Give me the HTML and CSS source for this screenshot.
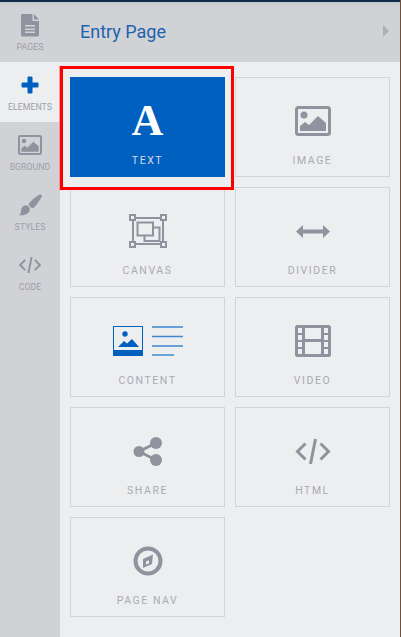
FILE: index.html
```html
<!DOCTYPE html>
<html lang="en">
<head>
<meta charset="utf-8">
<title>Entry Page</title>
<link rel="stylesheet" href="styles.css">
</head>
<body>
<div class="app">
  <div class="topbar"></div>
  <div class="workspace">
    <nav class="sidebar">
      <a class="nav-item">
        <svg class="nav-icon" width="20" height="24" viewBox="0 0 20 24"><path class="fill" fill-rule="evenodd" d="M2 1h10.500v7h6.500v14a1.500 1.500 0 0 1-1.500 1.500h-15A1.500 1.500 0 0 1 1 22V2.500A1.500 1.500 0 0 1 2 1zM14 1l5 5.500h-5zM5 12v1.500h10V12zM5 15.500V17h10v-1.500zM5 18.500V20h10v-1.500z"/></svg>
        <span class="nav-label">PAGES</span>
      </a>
      <a class="nav-item active">
        <svg class="nav-icon" width="18" height="18" viewBox="0 0 18 18"><path class="blue" d="M6.500 1.500A1 1 0 0 1 7.500 .5h3a1 1 0 0 1 1 1v5h5a1 1 0 0 1 1 1v3a1 1 0 0 1-1 1h-5v5a1 1 0 0 1-1 1h-3a1 1 0 0 1-1-1v-5h-5a1 1 0 0 1-1-1v-3a1 1 0 0 1 1-1h5z"/></svg>
        <span class="nav-label">ELEMENTS</span>
      </a>
      <a class="nav-item">
        <svg class="nav-icon" width="24" height="20" viewBox="0 0 36 30"><rect class="outline" x="1.500" y="1.500" width="33" height="27" rx="2"/><circle class="fill" cx="9" cy="9" r="3.500"/><path class="fill" d="M5 25v-5l5-4 4 3 9-9 8 7v8z"/></svg>
        <span class="nav-label">BGROUND</span>
      </a>
      <a class="nav-item">
        <svg class="nav-icon" width="24" height="22" viewBox="0 0 24 22"><path class="fill" d="M22.500 .5c1.200 0 1.800 1.200 1.200 2.200-1.800 3.300-4.800 8-7.700 10.800-1 .9-2 1-2.700.3l-2.300-2.300c-.6-.7-.5-1.600.3-2.500C14 6 19 1.800 22 .6zM4 13.500c1.800-2.500 5.500-2.600 7 -.5 1.400 2 .8 4.600-1 6-2 1.600-5.600 2.800-9.500 2.200 2-1 2.300-2 2.500-3.700.1-1.500 0-2.800 1-4z"/></svg>
        <span class="nav-label">STYLES</span>
      </a>
      <a class="nav-item">
        <svg class="nav-icon" width="23" height="19" viewBox="0 0 36 27"><path class="line" d="M10.500 5.500 2.500 13.500l8 8M25.500 5.500l8 8-8 8M20.500 1 15.500 26"/></svg>
        <span class="nav-label">CODE</span>
      </a>
    </nav>
    <main class="panel">
      <header class="panel-head">
        <h1 class="panel-title">Entry Page</h1>
        <span class="panel-arrow"></span>
      </header>
      <section class="grid">
        <div class="card selected">
          <div class="card-icon"><span class="glyph-a">A</span></div>
          <div class="card-label">TEXT</div>
        </div>
        <div class="card">
          <div class="card-icon"><svg width="36" height="30" viewBox="0 0 36 30"><rect class="outline" x="1.500" y="1.500" width="33" height="27" rx="2"/><circle class="fill" cx="9" cy="9" r="3.500"/><path class="fill" d="M5 25v-5l5-4 4 3 9-9 8 7v8z"/></svg></div>
          <div class="card-label">IMAGE</div>
        </div>
        <div class="card">
          <div class="card-icon"><svg width="38" height="34" viewBox="0 0 38 34"><path class="line-thin" d="M4 4h30v26H4zM8.500 8.500h15.500v13H8.500zM24 13.500h6.500v13.500H15.500v-5.500"/><rect class="handle" x="1" y="1" width="5" height="5"/><rect class="handle" x="32" y="1" width="5" height="5"/><rect class="handle" x="1" y="28" width="5" height="5"/><rect class="handle" x="32" y="28" width="5" height="5"/></svg></div>
          <div class="card-label">CANVAS</div>
        </div>
        <div class="card">
          <div class="card-icon"><svg width="34" height="13" viewBox="0 0 34 13"><path class="fill" d="M0 6.500 7 0v4.500h20V0l7 6.500-7 6.500V8.500H7V13z"/></svg></div>
          <div class="card-label">DIVIDER</div>
        </div>
        <div class="card">
          <div class="card-icon"><svg width="71" height="30" viewBox="0 0 71 30"><rect class="blue-frame" x="1.500" y=".5" width="29" height="29"/><rect class="blue" x="1" y="24" width="30" height="6"/><circle class="blue" cx="13" cy="8" r="2.700"/><path class="blue" d="M6 21l6-6 3 2.500 5-4.500 7 8z"/><path class="blue-line" d="M40 1h31M40 10.500h31M40 20h31"/><path class="blue-line soft" d="M40 29h22"/></svg></div>
          <div class="card-label">CONTENT</div>
        </div>
        <div class="card">
          <div class="card-icon"><svg width="36" height="32" viewBox="0 0 36 32"><path class="fill" fill-rule="evenodd" d="M2.500 0h31A2.500 2.500 0 0 1 36 2.500v27a2.500 2.500 0 0 1-2.500 2.500h-31A2.500 2.500 0 0 1 0 29.500v-27A2.500 2.500 0 0 1 2.500 0zM3 3v5h4V3zM3 10v5h4v-5zM3 17v5h4v-5zM3 24v5h4v-5zM29 3v5h4V3zM29 10v5h4v-5zM29 17v5h4v-5zM29 24v5h4v-5zM10 3v11h16V3zM10 17v12h16V17z"/></svg></div>
          <div class="card-label">VIDEO</div>
        </div>
        <div class="card">
          <div class="card-icon"><svg width="30" height="29" viewBox="0 0 30 29"><path class="share-line" d="M6 14.500 23 6M6 14.500 23 23"/><circle class="fill" cx="6" cy="14.500" r="5.500"/><circle class="fill" cx="23" cy="6" r="6"/><circle class="fill" cx="23" cy="23" r="6"/></svg></div>
          <div class="card-label">SHARE</div>
        </div>
        <div class="card">
          <div class="card-icon"><svg width="36" height="27" viewBox="0 0 36 27"><path class="line" d="M10.500 5.500 2.500 13.500l8 8M25.500 5.500l8 8-8 8M20.500 1 15.500 26"/></svg></div>
          <div class="card-label">HTML</div>
        </div>
        <div class="card">
          <div class="card-icon"><svg width="30" height="30" viewBox="0 0 30 30"><circle class="ring" cx="15" cy="15" r="12.500"/><path class="fill" d="M20 8.500 19 18 10 22 10 13z"/><path class="cut" d="M13 15.500v3.300l3-1.500v-3z"/></svg></div>
          <div class="card-label">PAGE NAV</div>
        </div>
      </section>
      <div class="highlight"></div>
    </main>
  </div>
</div>
</body>
</html>
```
FILE: styles.css
```css
* { box-sizing: border-box; }
html, body { margin: 0; height: 100%; }
body { font-family: Roboto, "Liberation Sans", sans-serif; background: #edeef0; }
.app { width: 401px; height: 637px; display: flex; flex-direction: column; border-right: 1px solid #6f4f3a; overflow: hidden; }
.topbar { height: 2px; background: #10294a; flex: none; }
.workspace { flex: 1; display: flex; min-height: 0; }
.sidebar { width: 60px; flex: none; background: linear-gradient(#c8c9cd, #d1d2d6 6px); display: flex; flex-direction: column; }
.nav-item { height: 60px; display: flex; flex-direction: column; align-items: center; position: relative; }
.nav-item.active { background: #edeef0; }
.nav-icon { position: absolute; top: 23px; left: 30px; transform: translate(-50%, -50%); }
.nav-label { margin-top: 39px; font-size: 8.800px; line-height: 12px; color: #9d9fa8; white-space: nowrap; }
.fill { fill: #90939d; }
.blue { fill: #0060bf; }
.outline { fill: none; stroke: #90939d; stroke-width: 3; }
.line { fill: none; stroke: #90939d; stroke-width: 3; }
.line-thin { fill: none; stroke: #90939d; stroke-width: 2; }
.handle { fill: #edeef0; stroke: #90939d; stroke-width: 2; }
.share-line { fill: none; stroke: #90939d; stroke-width: 3; }
.ring { fill: none; stroke: #90939d; stroke-width: 4; }
.cut { fill: #edeef0; }
.blue-frame { fill: none; stroke: #0060bf; stroke-width: 1; }
.blue-line { fill: none; stroke: #3f86cf; stroke-width: 1.500; }
.blue-line.soft { stroke: #6ba3db; stroke-width: 2; }
.panel { flex: 1; position: relative; min-width: 0; }
.panel-head { height: 60px; background: linear-gradient(#c8c9cd, #d1d2d6 6px); display: flex; align-items: center; justify-content: space-between; padding: 0 11px 2px 20px; }
.panel-title { margin: 0; font-size: 18px; font-weight: 400; color: #1c63b0; }
.panel-arrow { width: 0; height: 0; border-left: 6px solid #aeb0b8; border-top: 6px solid transparent; border-bottom: 6px solid transparent; }
.grid { display: grid; grid-template-columns: 155px 155px; grid-auto-rows: 100px; gap: 10px; padding: 15px 10px; }
.card { border: 1px solid #d2d3d7; padding-top: 18px; display: flex; flex-direction: column; align-items: center; }
.card.selected { background: #0060bf; border-color: #0060bf; }
.card-icon { height: 50px; display: flex; align-items: center; justify-content: center; }
.card-icon svg { display: block; }
.card-label { margin-top: 8px; font-size: 10.500px; line-height: 14px; letter-spacing: 1.550px; color: #a9abb3; white-space: nowrap; }
.selected .card-label { color: #d4dbe6; }
.glyph-a { font-family: "Liberation Serif", serif; font-weight: 700; font-size: 44px; line-height: 50px; color: #fff; }
.highlight { position: absolute; left: 0; top: 64px; width: 174px; height: 124px; border: 3px solid #f00; box-shadow: -1px 0 0 #e79a9a; pointer-events: none; }
```
